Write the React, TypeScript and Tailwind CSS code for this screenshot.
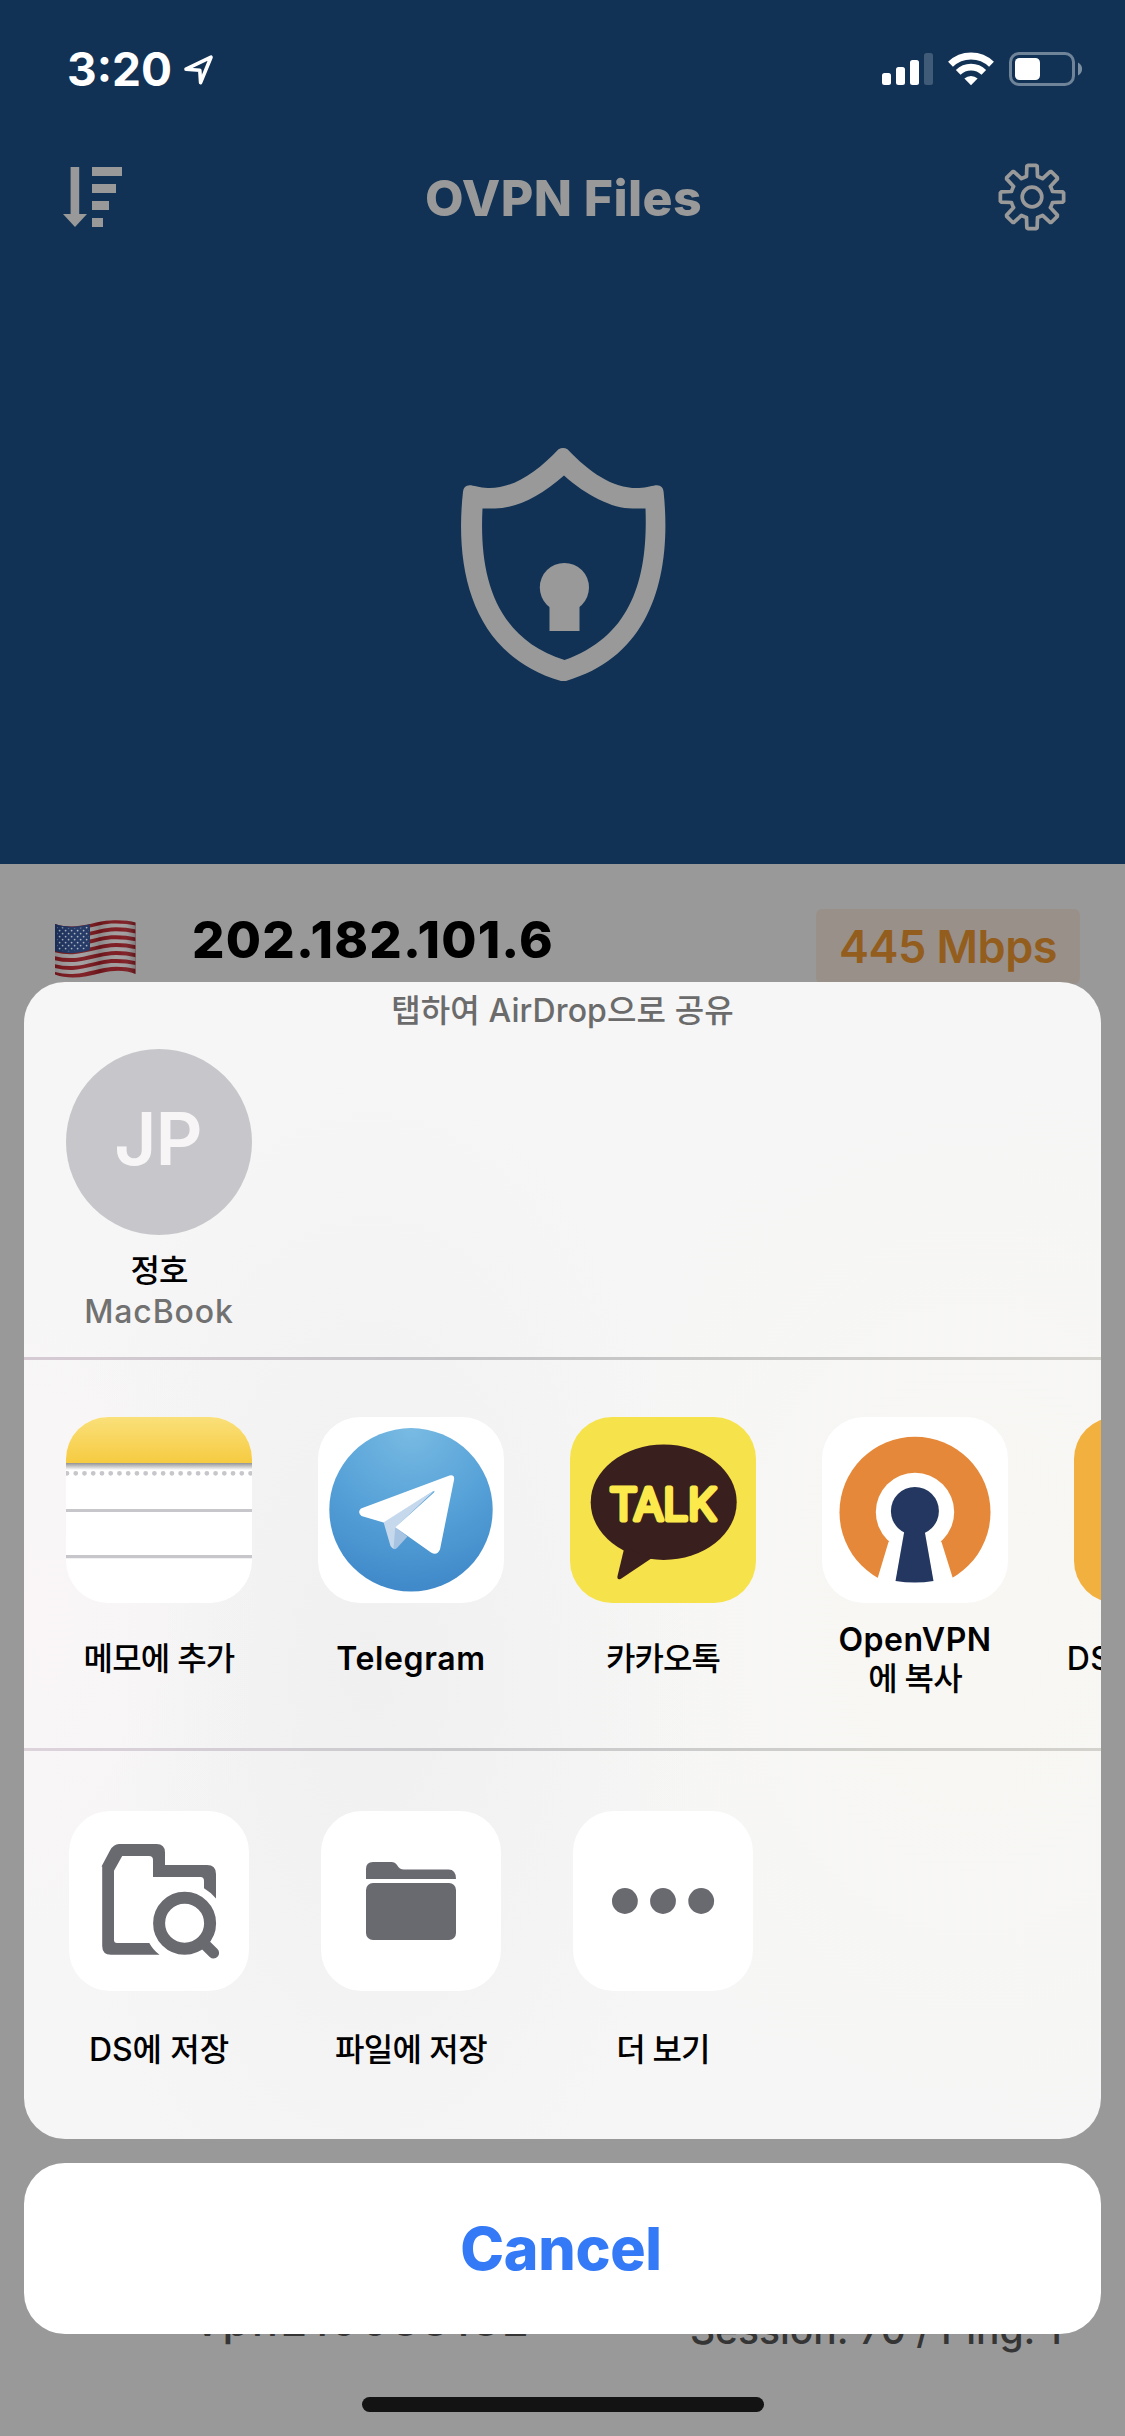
import type { ReactNode } from "react";

const fontStack = "font-['Inter','Noto_Sans_CJK_KR',sans-serif]";

function StatusBar() {
  return (
    <div className="flex h-[132px] items-start justify-between pt-[52px] pr-[42px] pl-[67px]">
      <div className="flex h-[34px] items-center text-white">
        <span className="w-[105px] text-[46px] leading-[34px] font-bold whitespace-nowrap">3:20</span>
        <svg className="mt-0.5 ml-[10px]" width="34" height="34" viewBox="0 0 34 34" fill="none">
          <path d="M4 16.2 29 4.2 18.6 29.6 17.8 17.2Z" stroke="white" strokeWidth="3.6" strokeLinejoin="round" />
        </svg>
      </div>
      <div className="flex h-[34px] items-start">
        <svg width="52" height="34" viewBox="0 0 52 34" fill="white">
          <rect x="0" y="21" width="9" height="12" rx="2.5" />
          <rect x="14" y="15" width="9" height="18" rx="2.5" />
          <rect x="28" y="8" width="9" height="25" rx="2.5" />
          <rect x="42" y="1" width="9" height="32" rx="2.5" fillOpacity="0.2" />
        </svg>
        <svg className="ml-[14px]" width="46" height="34" viewBox="0 0 46 34" fill="none" stroke="white">
          <path d="M2.5 12.3a29.5 29.5 0 0 1 41 0" strokeWidth="7" />
          <path d="M10.2 20.4a18.2 18.2 0 0 1 25.6 0" strokeWidth="6.6" />
          <path d="M16.4 26.6a9.4 9.4 0 0 1 13.2 0L23 33.2Z" fill="white" stroke="none" />
        </svg>
        <svg className="ml-[15px]" width="74" height="34" viewBox="0 0 74 34" fill="none">
          <rect x="1.5" y="1.5" width="63" height="31" rx="8.5" stroke="white" strokeOpacity="0.4" strokeWidth="3" />
          <rect x="6" y="6" width="25" height="22" rx="4.5" fill="white" />
          <path d="M69 10.5c5.4 2.4 5.4 10.6 0 13Z" fill="white" fillOpacity="0.45" />
        </svg>
      </div>
    </div>
  );
}

function SortIcon() {
  return (
    <svg width="60" height="60" viewBox="0 0 60 60" fill="#999">
      <path d="M7.6 0h8.6v47H24L12 60 0 47h7.6Z" />
      <path d="M29 0h30v9H29zM29 17h24v9H29zM29 34h17v9H29zM29 51h11v9H29z" />
    </svg>
  );
}

function GearIcon() {
  const steps = [0, 45, 90, 135, 180, 225, 270, 315];
  const point = (radius: number, degrees: number) => {
    const a = (degrees * Math.PI) / 180;
    return `${(34 + radius * Math.sin(a)).toFixed(2)} ${(34 - radius * Math.cos(a)).toFixed(2)}`;
  };
  const outline = steps
    .map((s) => `${point(21.2, s - 19)} L${point(21.2, s - 15)} L${point(31.2, s - 9.5)} L${point(31.9, s - 7.5)} L${point(31.9, s + 7.5)} L${point(31.2, s + 9.5)} L${point(21.2, s + 15)} L${point(21.2, s + 19)}`)
    .join(" L");
  return (
    <svg width="68" height="68" viewBox="0 0 68 68" fill="none" stroke="#999" strokeWidth="3.7" strokeLinejoin="round">
      <path d={`M${outline}Z`} />
      <circle cx="34" cy="34" r="9.8" />
    </svg>
  );
}

function Shield() {
  return (
    <svg width="206" height="234" viewBox="0 0 206 234">
      <path
        d="M97.5 1.2q4.7-2.4 9 0C129 25 153 41 178 40c8 0 14-2.7 18-2.7q6 .2 6.6 6.5C211 125 192 208 105 233h-5C13 208-7 125 2 43.8q.6-6.3 6.6-6.5c4 0 10 2.7 18 2.7C51 41 75 25 97.5 1.2Z"
        fill="#999"
      />
      <path
        d="M103 27.5C79 49 54 60.5 34 60.5H21.5C18 128 34 190 103.5 212 172 188 187 128 184.5 60.5h-12C152 61 126 48 103 27.5Z"
        fill="#113255"
      />
      <circle cx="103.4" cy="139.5" r="24.6" fill="#999" />
      <path d="M88.5 150h30v33h-30Z" fill="#999" />
    </svg>
  );
}

function UsFlag() {
  const stripes = [0, 1, 2, 3, 4, 5];
  return (
    <svg width="81" height="58" viewBox="0 0 81 58">
      <defs>
        <clipPath id="flag-cloth">
          <path d="M0 4C22 11 38 1 56 .5 66 0 75 1 80.5 2.5V54C70 50 60 50 46 53 30 57 15 60 0 54.5Z" />
        </clipPath>
        <linearGradient id="flag-shade" x1="0" x2="1" y1="0" y2="0">
          <stop offset="0" stopColor="#000" stopOpacity=".12" />
          <stop offset=".3" stopColor="#fff" stopOpacity=".05" />
          <stop offset=".55" stopColor="#000" stopOpacity=".14" />
          <stop offset=".8" stopColor="#fff" stopOpacity=".03" />
          <stop offset="1" stopColor="#000" stopOpacity=".25" />
        </linearGradient>
        <pattern id="flag-stars" width="6" height="6" patternUnits="userSpaceOnUse">
          <circle cx="1.6" cy="1.6" r=".9" fill="#a9b3bd" />
          <circle cx="4.6" cy="4.6" r=".9" fill="#a9b3bd" />
        </pattern>
      </defs>
      <g clipPath="url(#flag-cloth)">
        <rect width="81" height="58" fill="#7b161c" />
        {stripes.map((n) => (
          <path
            key={n}
            d="M-2 9C22 16 38 6 56 4.5 66 4 75 5 83 7"
            transform={`translate(0 ${n * 7.9 + 1})`}
            fill="none"
            stroke="#a09d9e"
            strokeWidth="3.9"
          />
        ))}
        <path d="M0 3C12 8 24 7 35 4V30C22 34 10 34 0 31Z" fill="#1b3160" />
        <path d="M2 6C12 9 24 9 34 6V28C22 32 10 32 2 30Z" fill="url(#flag-stars)" />
        <rect width="81" height="58" fill="url(#flag-shade)" />
      </g>
    </svg>
  );
}

function NotesIcon() {
  return (
    <svg width="186" height="186" viewBox="0 0 186 186">
      <defs>
        <linearGradient id="notes-top" x1="0" x2="0" y1="0" y2="1">
          <stop offset="0" stopColor="#fae07a" />
          <stop offset="1" stopColor="#f6cb41" />
        </linearGradient>
        <linearGradient id="notes-shadow" x1="0" x2="0" y1="0" y2="1">
          <stop offset="0" stopColor="#939393" />
          <stop offset="1" stopColor="#fff" />
        </linearGradient>
      </defs>
      <rect width="186" height="186" fill="#fff" />
      <rect width="186" height="46" fill="url(#notes-top)" />
      <rect y="46" width="186" height="7" fill="url(#notes-shadow)" />
      <path d="M1 56.3H187" stroke="#c7c6cb" strokeWidth="4.8" strokeLinecap="round" strokeDasharray="0 8.74" />
      <path d="M0 92H186V95H0ZM0 138H186V141.3H0Z" fill="#c7c6cb" />
    </svg>
  );
}

function TelegramIcon() {
  return (
    <svg width="186" height="186" viewBox="0 0 186 186">
      <defs>
        <radialGradient id="tg-sky" cx=".5" cy="0" r="1.05">
          <stop offset="0" stopColor="#79bbe3" />
          <stop offset=".5" stopColor="#57a2d8" />
          <stop offset="1" stopColor="#3d86c8" />
        </radialGradient>
      </defs>
      <rect width="186" height="186" fill="#fff" />
      <circle cx="93" cy="92.8" r="81.7" fill="url(#tg-sky)" />
      <path d="M65.5 105 117 73 78 110 77.5 131.5Q75 133 72.5 129Z" fill="#c6d8ec" />
      <path d="M77.3 110 89.5 119.5 79 131Q77 133 75.5 131.5Z" fill="#a6c3e1" />
      <path
        d="M43 91.5 131.5 58.5Q137 57.5 136 63L122 132.5Q119 139 113 135.5L77.3 110.3 116 75.5Q117.5 72.5 114.5 74.5L65.5 105.5 43.5 99Q39 95 43 91.5Z"
        fill="#fff"
      />
    </svg>
  );
}

function KakaoIcon() {
  return (
    <svg width="186" height="186" viewBox="0 0 186 186">
      <rect width="186" height="186" fill="#f6e24b" />
      <ellipse cx="93.7" cy="85.2" rx="73" ry="57.7" fill="#391f1e" />
      <path d="M54.5 130 47.3 160Q47.5 163.5 51 161.7L82 141Z" fill="#391f1e" />
      <text
        x="39.5"
        y="102.8"
        textLength="107"
        lengthAdjust="spacingAndGlyphs"
        className="font-['Inter'] text-[44px] font-light"
        fill="#fcea4c"
        stroke="#fcea4c"
        strokeWidth="5"
        strokeLinejoin="round"
      >
        TALK
      </text>
    </svg>
  );
}

function OpenVpnIcon() {
  return (
    <svg width="186" height="186" viewBox="0 0 186 186">
      <rect width="186" height="186" fill="#fff" />
      <circle cx="93" cy="95.2" r="75.5" fill="#e58839" />
      <circle cx="93" cy="95" r="39.2" fill="#fff" />
      <path d="M66.5 125 54.5 165V180H132V165L119.5 125 93 100Z" fill="#fff" />
      <circle cx="92.9" cy="94" r="24" fill="#233760" />
      <path d="M82.7 112H102.3L111.5 164Q93 167 73.5 164Z" fill="#233760" />
    </svg>
  );
}

function DsFileIcon() {
  return (
    <svg width="186" height="186" viewBox="0 0 186 186">
      <rect width="186" height="186" fill="#f2b03f" />
    </svg>
  );
}

function DsSaveIcon() {
  return (
    <svg width="180" height="180" viewBox="0 0 180 180" fill="#696970">
      <path d="M32.5 55.5 41 39.5Q44.5 33 50 33H87.5Q96 33 96 41.5V54H138Q147 54 147 63V87.5Q142 81.5 135 77.3V70Q135 66 131.5 66H84V49Q84 45 80 45H53.2L45 59.7V129Q45 132 48 132H80.3Q84 139 90.5 143.7H42Q33.2 143.7 33.2 135V55.5Z" />
      <circle cx="115.6" cy="112.3" r="25.5" fill="none" stroke="#696970" strokeWidth="12" />
      <path d="M136 133.5 144.6 142" stroke="#696970" strokeWidth="11" strokeLinecap="round" />
    </svg>
  );
}

function FolderIcon() {
  return (
    <svg width="180" height="180" viewBox="0 0 180 180" fill="#696970">
      <path d="M45 68V58Q45 51 52 51H70.5Q74 51 76 54 78.5 58.5 83 58.5H127.5Q135 58.5 135 68Z" />
      <rect x="45" y="72" width="90" height="57" rx="7" />
    </svg>
  );
}

function MoreIcon() {
  return (
    <svg width="180" height="180" viewBox="0 0 180 180" fill="#696970">
      <circle cx="51.9" cy="90" r="12.9" />
      <circle cx="90" cy="90" r="12.9" />
      <circle cx="128.2" cy="90" r="12.9" />
    </svg>
  );
}

type Item = { label: ReactNode; icon: ReactNode; id: string };

const apps: Item[] = [
  { id: "notes", label: <span className="tracking-[-0.8px]">메모에 추가</span>, icon: <NotesIcon /> },
  { id: "telegram", label: <span className="font-semibold tracking-[0.6px]">Telegram</span>, icon: <TelegramIcon /> },
  { id: "kakao", label: <span className="tracking-[-0.9px]">카카오톡</span>, icon: <KakaoIcon /> },
  {
    id: "openvpn",
    label: (
      <div className="pt-0.5">
        <span className="font-semibold tracking-[0.5px]">OpenVPN</span>
        <br />
        <span className="tracking-[-0.8px]">에 복사</span>
      </div>
    ),
    icon: <OpenVpnIcon />,
  },
  { id: "dsfile", label: <span className="tracking-[0.4px]">DS file에 복사</span>, icon: <DsFileIcon /> },
];

const actions: Item[] = [
  { id: "ds", label: <span className="tracking-[-0.1px]">DS에 저장</span>, icon: <DsSaveIcon /> },
  { id: "files", label: <span className="tracking-[-0.6px]">파일에 저장</span>, icon: <FolderIcon /> },
  { id: "more", label: <span className="tracking-[-0.9px]">더 보기</span>, icon: <MoreIcon /> },
];

function Label({ children }: { children: ReactNode }) {
  return (
    <div className="flex h-[78px] items-center justify-center text-center text-[32px] leading-[39px] font-medium whitespace-nowrap text-black">
      <div>{children}</div>
    </div>
  );
}

function ShareSheet() {
  return (
    <div className="flex h-[1157px] flex-col overflow-hidden rounded-[41px] bg-[#f6f6f6] bg-[radial-gradient(ellipse_240px_420px_at_0%_55%,#faf6f8_0%,transparent_100%),radial-gradient(ellipse_330px_620px_at_32%_60%,#f0f0f0_0%,transparent_100%),radial-gradient(ellipse_420px_560px_at_88%_55%,#f8f7f3_0%,transparent_100%)]">
      <p className="h-14 text-center text-[32px] leading-[57px] font-medium tracking-[0.1px] text-[#6b6b6b]">탭하여 AirDrop으로 공유</p>
      <div className="mt-[11px] flex h-[308px] pl-6">
        <div className="flex w-[222px] flex-col items-center">
          <div className="flex h-[186px] w-[186px] items-center justify-center rounded-full bg-[#c7c6cb] pr-[2px] text-[73px] leading-[179px] font-semibold tracking-[-1px] text-[#f7f5f6]">
            <span className="mb-[7px]">JP</span>
          </div>
          <p className="mt-4 text-[32px] leading-10 font-medium tracking-[-0.9px] text-black">정호</p>
          <p className="mt-px text-[32px] leading-10 font-medium tracking-[0.9px] text-[#717171]">MacBook</p>
        </div>
      </div>
      <div className="h-[3px] shrink-0 bg-linear-to-r from-[#d6cbd4] via-[#c3c3c6] via-40% to-[#d3d2cc]" />
      <div className="flex h-[388px] shrink-0 pt-[57px] pl-[9px]">
        {apps.map((item) => (
          <div key={item.id} className="flex w-[252px] shrink-0 flex-col items-center">
            <div className="h-[186px] w-[186px] overflow-hidden rounded-[42px]">{item.icon}</div>
            <div className="mt-4">
              <Label>{item.label}</Label>
            </div>
          </div>
        ))}
      </div>
      <div className="h-[3px] shrink-0 bg-linear-to-r from-[#ddd3db] via-[#c9c9cc] via-40% to-[#d3d2cc]" />
      <div className="flex flex-1 pt-[60px] pl-[9px]">
        {actions.map((item) => (
          <div key={item.id} className="flex w-[252px] shrink-0 flex-col items-center">
            <div className="h-[180px] w-[180px] overflow-hidden rounded-[41px] bg-white">{item.icon}</div>
            <div className="mt-[19px]">
              <Label>{item.label}</Label>
            </div>
          </div>
        ))}
      </div>
    </div>
  );
}

export default function App() {
  return (
    <div className={`relative flex h-[2436px] w-[1125px] flex-col overflow-hidden bg-[#999] ${fontStack}`}>
      <div className="flex h-[864px] shrink-0 flex-col bg-[#113255]">
        <StatusBar />
        <header className="flex h-[132px] items-start justify-between pr-[59px] pl-[62px]">
          <div className="mt-[35px] ml-px w-[68px]">
            <SortIcon />
          </div>
          <h1 className="mt-9 mr-[2px] text-[50px] leading-[60px] font-extrabold tracking-[0.4px] text-[#999]">OVPN Files</h1>
          <div className="mt-[31px]">
            <GearIcon />
          </div>
        </header>
        <div className="flex justify-center pt-[184px] pl-[2px]">
          <Shield />
        </div>
      </div>

      <div className="flex items-start pt-[45px] pr-[45px] pl-[55px]">
        <div className="mt-[11px]">
          <UsFlag />
        </div>
        <span className="mt-px ml-[56px] text-[51px] leading-[60px] font-extrabold tracking-[1.2px] text-black">202.182.101.6</span>
        <span className="ml-auto flex h-[75px] w-[264px] items-center justify-center rounded-[6px] bg-[#999089] text-[45px] font-semibold tracking-[-0.5px] text-[#935d1e]">
          445 Mbps
        </span>
      </div>

      <div className="mt-auto flex h-[135px] items-start justify-between pr-[63px] pl-[195px] font-medium text-[#353535]">
        <span className="text-[43px] leading-[39px] tracking-[2.9px]">vpn219088182</span>
        <span className="mt-[5px] text-[39px] leading-[48px]">Session: 70 / Ping: 1</span>
      </div>

      <div className="absolute inset-x-6 top-[982px] flex flex-col gap-6">
        <ShareSheet />
        <button className="h-[171px] rounded-[41px] bg-white pr-[3px] text-[59px] leading-[172px] font-extrabold tracking-[-0.3px] text-[#347af7]">Cancel</button>
      </div>

      <div className="absolute bottom-6 left-[362px] h-[15px] w-[402px] rounded-full bg-[#131313]" />
    </div>
  );
}
